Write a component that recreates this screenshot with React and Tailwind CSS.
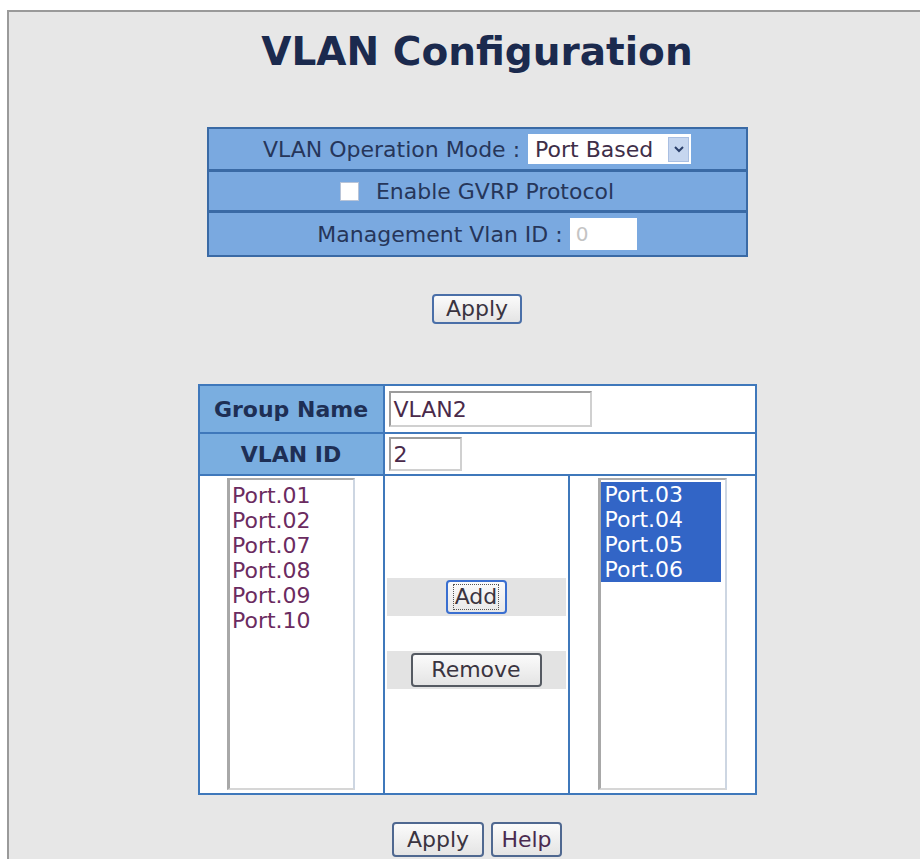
import React from "react";

const leftPorts = ["Port.01", "Port.02", "Port.07", "Port.08", "Port.09", "Port.10"];
const rightPorts = ["Port.03", "Port.04", "Port.05", "Port.06"];

const Button = ({ children, className = "" }) => (
  <button
    className={`flex items-center justify-center rounded-[4px] border-2 bg-gradient-to-b from-[#fbfbfb] to-[#e4e4e4] text-[22px] leading-none text-[#3a3440] ${className}`}
  >
    {children}
  </button>
);

const App = () => {
  return (
    <div className="w-[920px] h-[859px] overflow-hidden bg-white pl-[7px] pt-[10px] font-['DejaVu_Sans',sans-serif]">
      <div className="w-[938px] h-[860px] bg-[#e7e7e7] border-l-2 border-t-2 border-[#9a9a9a] flex flex-col items-center">

        {/* TITLE */}
        <h1 className="mt-[16px] text-[39px] leading-[47px] font-bold text-[#1b2a4e]">
          VLAN Configuration
        </h1>

        {/* MODE TABLE */}
        <div className="mt-[52px] w-[541px] border-2 border-[#3a6aa5] bg-[#7aa9e0] text-[22px] text-[#26365a]">
          <div className="h-[40px] flex items-center justify-center gap-[8px]">
            <span>VLAN Operation Mode :</span>
            <div className="w-[163px] h-[30px] bg-white flex items-center justify-between pl-[7px] pr-[2px]">
              <span className="text-[#3e2e48]">Port Based</span>
              <span className="w-[21px] h-[25px] bg-[#c6d6ef] border border-[#a9bfe2] flex items-center justify-center">
                <svg width="10" height="7" viewBox="0 0 10 7">
                  <path d="M1 1 L5 5 L9 1" fill="none" stroke="#2b3f6a" strokeWidth="2" />
                </svg>
              </span>
            </div>
          </div>
          <div className="h-[41px] border-t-[3px] border-[#3a6aa5] flex items-center justify-center gap-[17px]">
            <span className="w-[19px] h-[19px] bg-white border border-[#b8c4d8]" />
            <span>Enable GVRP Protocol</span>
          </div>
          <div className="h-[45px] border-t-[3px] border-[#3a6aa5] flex items-center justify-center gap-[7px]">
            <span>Management Vlan ID :</span>
            <div className="w-[67px] h-[32px] bg-white pl-[6px] flex items-center text-[20px] text-[#c4c4c4]">0</div>
          </div>
        </div>

        <Button className="mt-[37px] w-[90px] h-[30px] border-[#4a6fa8]">Apply</Button>

        {/* GROUP TABLE */}
        <div className="mt-[60px] w-[559px] border-2 border-[#3f78bb] bg-white text-[22px]">
          <div className="flex h-[48px] border-b-2 border-[#3f78bb]">
            <div className="w-[185px] border-r-2 border-[#3f78bb] bg-[#7aaee0] flex items-center justify-center font-bold text-[#1e2f55]">
              Group Name
            </div>
            <div className="flex-1 flex items-center pl-[4px]">
              <div className="w-[203px] h-[36px] border-2 border-t-[#9c9c9c] border-l-[#9c9c9c] border-r-[#d0d0d0] border-b-[#d0d0d0] flex items-center pl-[3px] text-[#4a2a4a]">
                VLAN2
              </div>
            </div>
          </div>
          <div className="flex h-[42px] border-b-2 border-[#3f78bb]">
            <div className="w-[185px] border-r-2 border-[#3f78bb] bg-[#7aaee0] flex items-center justify-center font-bold text-[#1e2f55]">
              VLAN ID
            </div>
            <div className="flex-1 flex items-center pl-[4px]">
              <div className="w-[73px] h-[34px] border-2 border-t-[#9c9c9c] border-l-[#9c9c9c] border-r-[#d0d0d0] border-b-[#d0d0d0] flex items-center pl-[3px] text-[#4a2a4a]">
                2
              </div>
            </div>
          </div>
          <div className="flex h-[317px]">
            {/* LEFT LIST */}
            <div className="w-[185px] border-r-2 border-[#3f78bb] flex justify-center pt-[2px] pb-[3px]">
              <div className="w-[128px] h-full border-l-[3px] border-t-2 border-r-2 border-b-2 border-l-[#a8a8a8] border-t-[#ababab] border-r-[#cdd6e2] border-b-[#d6d6d6] pt-[3px] pl-[2px] leading-[25px] text-[#6b2b60]">
                {leftPorts.map((p) => (
                  <div key={p}>{p}</div>
                ))}
              </div>
            </div>

            {/* MIDDLE BUTTONS */}
            <div className="w-[185px] border-r-2 border-[#3f78bb] flex flex-col px-[2px] pt-[102px]">
              <div className="h-[38px] bg-[#e3e3e3] flex items-center justify-center">
                <button className="w-[61px] h-[34px] rounded-[4px] border-2 border-[#3a6fd0] bg-gradient-to-b from-[#fbfbfb] to-[#e8e8e8] flex items-center justify-center text-[22px] text-[#3a3440]">
                  <span className="outline outline-1 outline-dotted outline-[#555] leading-[24px] px-[1px]">Add</span>
                </button>
              </div>
              <div className="mt-[35px] h-[38px] bg-[#e3e3e3] flex items-center justify-center">
                <Button className="w-[131px] h-[34px] border-[#555a62]">Remove</Button>
              </div>
            </div>

            {/* RIGHT LIST */}
            <div className="flex-1 flex justify-center pt-[2px] pb-[3px]">
              <div className="w-[129px] h-full border-l-[3px] border-t-2 border-r-2 border-b-2 border-l-[#a8a8a8] border-t-[#ababab] border-r-[#cdd6e2] border-b-[#d6d6d6] pt-[2px] pr-[4px] leading-[25px] text-white">
                {rightPorts.map((p) => (
                  <div key={p} className="bg-[#3265c6] pl-[4px]">{p}</div>
                ))}
              </div>
            </div>
          </div>
        </div>

        {/* FOOTER BUTTONS */}
        <div className="mt-[27px] flex gap-[7px]">
          <Button className="w-[92px] h-[35px] border-[#4f6890]">Apply</Button>
          <Button className="w-[71px] h-[35px] border-[#4f6890] text-[#4a2a50]">Help</Button>
        </div>
      </div>
    </div>
  );
};

export default App;
